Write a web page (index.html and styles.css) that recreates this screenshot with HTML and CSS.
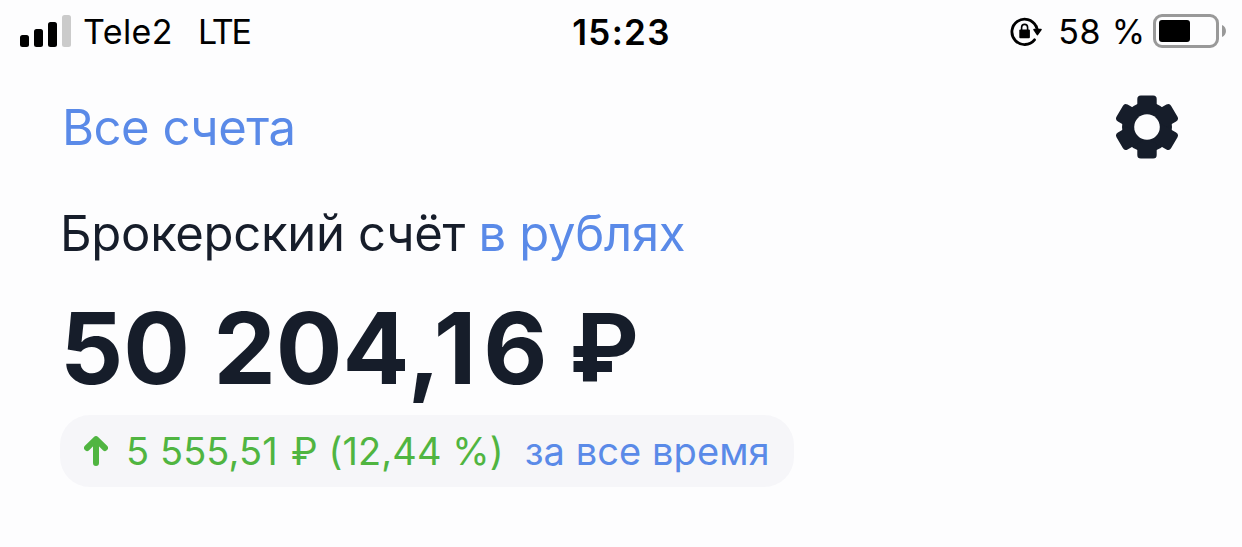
FILE: index.html
```html
<!DOCTYPE html>
<html lang="ru">
  <head>
    <meta charset="UTF-8" />
    <meta name="viewport" content="width=device-width, initial-scale=1.0" />
    <title>Брокерский счёт</title>
    <link rel="stylesheet" href="styles.css">
  </head>
  <body>
    <div class="status-bar">
      <div class="status-left">
        <svg class="signal" width="52" height="32" viewBox="0 0 52 32">
          <rect x="0" y="20" width="9" height="12" rx="2.5" />
          <rect x="14" y="14" width="9" height="18" rx="2.5" />
          <rect x="28" y="7" width="9" height="25" rx="2.5" />
          <rect x="42" y="0" width="9" height="32" rx="2.5" fill="#cbcbcb" />
        </svg>
        <span class="carrier">Tele2</span>
        <span class="network">LTE</span>
      </div>
      <span class="time">15:23</span>
      <div class="status-right">
        <!-- Orientation lock -->
        <svg class="lock" width="32" height="30" viewBox="0 0 32 30">
          <path d="M26 9.200A12.700 12.700 0 1 0 24.500 22.800" fill="none" stroke="#000" stroke-width="2.800" stroke-linecap="round" />
          <path d="M24 12.600H31L27.400 17.600Z" stroke="#000" stroke-width="1.6" stroke-linejoin="round" />
          <path d="M26 9L27.500 13" stroke="#000" stroke-width="2.800" />
          <rect x="9.300" y="12.500" width="10.600" height="8.700" rx="1" />
          <path d="M11.600 13.500V10.400a3 3 0 0 1 6 0V13.500" fill="none" stroke="#000" stroke-width="1.6" />
        </svg>
        <span class="charge">58 %</span>
        <svg class="battery" width="74" height="34" viewBox="0 0 74 34">
          <rect x="1.5" y="1.5" width="63" height="31" rx="7.5" fill="none" stroke="#999" stroke-width="3" />
          <rect x="6" y="6" width="31" height="22" rx="3" />
          <path d="M69 11c5.300 2 5.300 10 0 12z" fill="#999" />
        </svg>
      </div>
    </div>

    <div class="header">
      <a class="accounts">Все счета</a>
      <svg class="settings" width="64" height="64" viewBox="-32 -32 64 64">
        <circle r="25" />
        <rect x="-9.700" y="-31.500" width="19.400" height="63" rx="3.500" />
        <rect x="-9.700" y="-31.500" width="19.400" height="63" rx="3.500" transform="rotate(60)" />
        <rect x="-9.700" y="-31.500" width="19.400" height="63" rx="3.500" transform="rotate(120)" />
        <circle r="12.800" fill="#fdfdfe" />
      </svg>
    </div>

    <div class="account">
      <h1 class="title">Брокерский счёт <span class="currency">в рублях</span></h1>
      <div class="balance">50 204<span class="comma">,</span><span class="one">1</span>6 <span class="ruble">₽</span></div>
      <div class="profit">
        <svg class="arrow" width="24" height="30" viewBox="0 0 24 30">
          <path d="M12 27V4M3 12L12 3.200L21 12" />
        </svg>
        <span class="amount">5 555,5<span class="one">1</span> ₽ (12,44 %)</span>
        <span class="period">за все время</span>
      </div>
    </div>
  </body>
</html>
```

FILE: styles.css
```css
* {
  margin: 0;
  padding: 0;
  box-sizing: border-box;
}

body {
  font-family: Inter, "Liberation Sans", sans-serif;
  background: #fdfdfe;
  color: #161d2a;
  height: 547px;
  overflow: hidden;
  white-space: nowrap;
}

/* Status bar */
.status-bar {
  display: grid;
  grid-template-columns: 1fr auto 1fr;
  align-items: center;
  height: 62px;
  padding: 0 15px 0 20px;
  font-size: 34px;
  line-height: 62px;
  color: #000;
}

.status-left,
.status-right {
  display: flex;
  align-items: center;
}

.status-right {
  justify-content: flex-end;
}

.signal,
.battery {
  margin-bottom: 2px;
}

.carrier,
.network,
.time,
.charge {
  padding-top: 1px;
}

.carrier {
  margin-left: 11px;
  letter-spacing: 0.4px;
}

.network {
  margin-left: 25px;
  letter-spacing: -2.2px;
}

.time {
  margin-right: 4px;
  font-size: 35px;
  font-weight: 600;
  letter-spacing: 1.3px;
}

.lock {
  margin-right: 16px;
}

.charge {
  letter-spacing: 0.8px;
}

.battery {
  margin-left: 7px;
}

/* Header */
.header {
  display: flex;
  justify-content: space-between;
  align-items: center;
  height: 130px;
  padding: 0 63px 0 62px;
}

.accounts {
  padding-top: 1px;
  font-size: 49px;
  letter-spacing: -0.5px;
}

.accounts,
.currency,
.period {
  color: #5a8ae8;
}

.settings {
  fill: #161d2a;
}

/* Account summary */
.account {
  padding: 1px 60px 0;
}

.title {
  margin-bottom: 6px;
  font-size: 49px;
  font-weight: 400;
  line-height: 82px;
  letter-spacing: -0.3px;
}

.balance {
  font-size: 99px;
  font-weight: 700;
  line-height: 134px;
}

.comma {
  margin-left: -2px;
  letter-spacing: -0.07em;
}

.one {
  letter-spacing: 0.07em;
}

.ruble {
  font-family: Roboto, Inter, sans-serif;
  font-size: 96px;
  line-height: 1;
  vertical-align: 2px;
}

.profit {
  display: inline-flex;
  align-items: center;
  height: 72px;
  padding: 0 24px;
  border-radius: 30px;
  background: #f6f6f9;
  font-size: 38px;
  letter-spacing: 0.08px;
}

.arrow {
  margin-right: 18px;
  fill: none;
  stroke: #50b541;
  stroke-width: 6;
  stroke-linecap: round;
  stroke-linejoin: round;
}

.amount {
  margin-right: 21px;
  color: #50b541;
}
```
